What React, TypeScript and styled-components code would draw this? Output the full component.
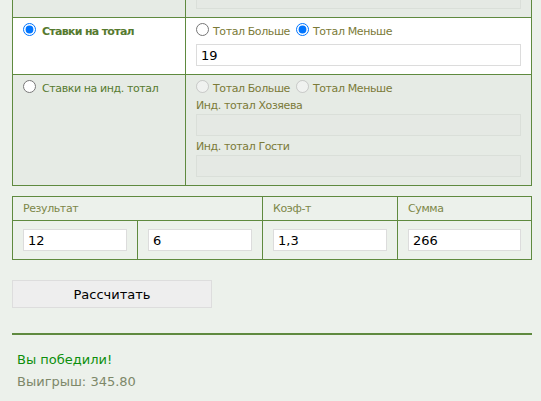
import React from "react";
import styled, { createGlobalStyle } from "styled-components";

const GlobalStyle = createGlobalStyle`
  html, body {
    margin: 0;
    padding: 0;
    background: #ecf1eb;
    font-family: "DejaVu Sans", Verdana, sans-serif;
    overflow: hidden;
  }
`;

const GREEN = "#5f8a3f";

const Page = styled.div`
  padding: 0 0 20px 12px;
  width: 520px;
`;

const BetTable = styled.div`
  display: grid;
  grid-template-columns: 172px 345px;
  gap: 1px;
  padding: 1px;
  background: ${GREEN};
  margin-top: -40px;
`;

const Cell = styled.div<{ $active?: boolean }>`
  background: ${(p) => (p.$active ? "#ffffff" : "#e6ebe5")};
  padding: 5px 10px 8px 10px;
  display: flex;
  flex-direction: column;
`;

const TopCell = styled(Cell)`
  min-height: 43px;
  justify-content: flex-end;
`;

const RadioLine = styled.div`
  display: flex;
  align-items: flex-start;
  height: 16px;
`;

const Option = styled.label<{ $bold?: boolean; $main?: boolean; $gap?: number }>`
  display: flex;
  align-items: flex-start;
  font-size: 11px;
  line-height: 18px;
  letter-spacing: ${(p) => (p.$bold ? "-0.7px" : "-0.4px")};
  font-weight: ${(p) => (p.$bold ? "bold" : "normal")};
  color: ${(p) => (p.$main ? "#567a2f" : "#7b7a38")};
  margin-right: 6px;
  white-space: nowrap;

  input {
    margin: 0 ${(p) => p.$gap ?? 4}px 0 0;
    width: 13px;
    height: 13px;
  }
`;

const FieldLabel = styled.div<{ $top: number }>`
  font-size: 11px;
  line-height: 16px;
  letter-spacing: -0.4px;
  color: #7b7a38;
  margin-top: ${(p) => p.$top}px;
`;

const TextInput = styled.input`
  box-sizing: border-box;
  width: 100%;
  height: 22px;
  border: 1px solid #dcdcdc;
  background: #ffffff;
  padding: 0 4px;
  font-family: "DejaVu Sans", Verdana, sans-serif;
  font-size: 13px;
  color: #000;
  outline: none;

  &:disabled {
    background: #e5e9e4;
    border-color: #dadfd9;
  }
`;

const SpacedInput = styled(TextInput)<{ $top: number }>`
  margin-top: ${(p) => p.$top}px;
`;

const ResultTable = styled.div`
  display: grid;
  grid-template-columns: 124px 124px 134px 133px;
  gap: 1px;
  padding: 1px;
  background: ${GREEN};
  margin-top: 10px;
`;

const HeadCell = styled.div<{ $span?: number }>`
  grid-column: span ${(p) => p.$span ?? 1};
  background: #ecf1eb;
  height: 23px;
  line-height: 24px;
  padding: 0 10px;
  font-size: 11px;
  letter-spacing: -0.4px;
  color: #7d8748;
`;

const InputCell = styled.div`
  background: #ecf1eb;
  padding: 8px 10px;
`;

const CalcButton = styled.button`
  display: block;
  margin-top: 20px;
  width: 200px;
  height: 28px;
  background: #eeeeee;
  border: 1px solid #dddddd;
  font-family: "DejaVu Sans", Verdana, sans-serif;
  font-size: 13px;
  color: #000;
  padding: 0;
`;

const Divider = styled.div`
  margin-top: 25px;
  height: 2px;
  background: ${GREEN};
`;

const Outcome = styled.div`
  margin-top: 14px;
  padding-left: 5px;
  font-size: 13px;
  line-height: 22px;
`;

const Win = styled.div`
  color: #0c8f0c;
`;

const Payout = styled.div`
  color: #7d8869;
`;

export default function App() {
  return (
    <>
      <GlobalStyle />
      <Page>
        <BetTable>
          <TopCell />
          <TopCell>
            <TextInput disabled />
          </TopCell>

          <Cell $active>
            <RadioLine>
              <Option $main $bold $gap={6}>
                <input type="radio" name="mode" defaultChecked />
                Ставки на тотал
              </Option>
            </RadioLine>
          </Cell>
          <Cell $active>
            <RadioLine>
              <Option>
                <input type="radio" name="total" />
                Тотал Больше
              </Option>
              <Option>
                <input type="radio" name="total" defaultChecked />
                Тотал Меньше
              </Option>
            </RadioLine>
            <SpacedInput $top={5} defaultValue="19" />
          </Cell>

          <Cell>
            <RadioLine>
              <Option $main $gap={6}>
                <input type="radio" name="mode" />
                Ставки на инд. тотал
              </Option>
            </RadioLine>
          </Cell>
          <Cell>
            <RadioLine>
              <Option>
                <input type="radio" disabled />
                Тотал Больше
              </Option>
              <Option>
                <input type="radio" disabled />
                Тотал Меньше
              </Option>
            </RadioLine>
            <FieldLabel $top={2}>Инд. тотал Хозяева</FieldLabel>
            <TextInput disabled />
            <FieldLabel $top={3}>Инд. тотал Гости</FieldLabel>
            <TextInput disabled />
          </Cell>
        </BetTable>

        <ResultTable>
          <HeadCell $span={2}>Результат</HeadCell>
          <HeadCell>Коэф-т</HeadCell>
          <HeadCell>Сумма</HeadCell>
          <InputCell>
            <TextInput defaultValue="12" />
          </InputCell>
          <InputCell>
            <TextInput defaultValue="6" />
          </InputCell>
          <InputCell>
            <TextInput defaultValue="1,3" />
          </InputCell>
          <InputCell>
            <TextInput defaultValue="266" />
          </InputCell>
        </ResultTable>

        <CalcButton type="button">Рассчитать</CalcButton>

        <Divider />

        <Outcome>
          <Win>Вы победили!</Win>
          <Payout>Выигрыш: 345.80</Payout>
        </Outcome>
      </Page>
    </>
  );
}
